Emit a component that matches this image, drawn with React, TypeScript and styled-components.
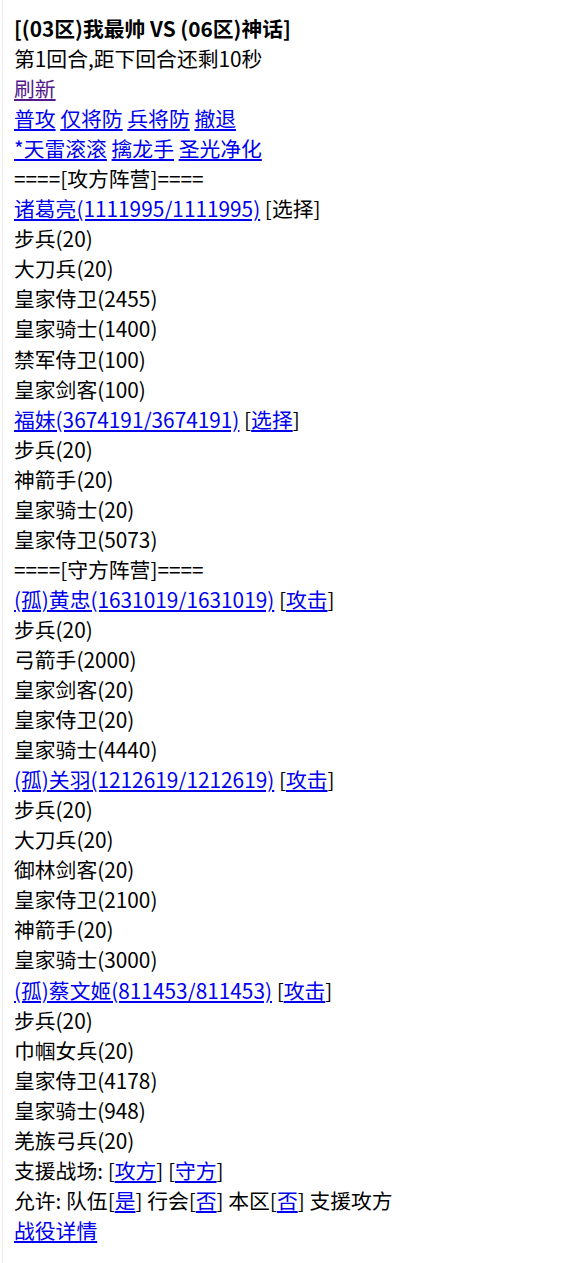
import { Fragment } from 'react';
import styled, { createGlobalStyle } from 'styled-components';

const GlobalStyle = createGlobalStyle`
  html, body {
    margin: 0;
    padding: 0;
    background: #ffffff;
  }
  body {
    font-family: "Noto Sans CJK SC", "Noto Sans", sans-serif;
    font-size: 20.8px;
    line-height: 30.05px;
    color: #000000;
  }
`;

const Page = styled.div`
  margin-left: 2px;
  min-height: 1263px;
  box-sizing: border-box;
  border-left: 1px solid #ececec;
  padding: 13px 0 0 11px;
`;

const Line = styled.div<{ $bold?: boolean }>`
  white-space: nowrap;
  font-weight: ${(p) => (p.$bold ? 700 : 400)};
`;

const Link = styled.a<{ $visited?: boolean }>`
  color: ${(p) => (p.$visited ? '#551a8b' : '#0000ee')};
  text-decoration: underline;
  cursor: pointer;
`;

interface General {
  name: string;
  hp: string;
  action: string;
  actionLink: boolean;
  troops: string[];
}

const attackers: General[] = [
  {
    name: '诸葛亮',
    hp: '1111995/1111995',
    action: '选择',
    actionLink: false,
    troops: ['步兵(20)', '大刀兵(20)', '皇家侍卫(2455)', '皇家骑士(1400)', '禁军侍卫(100)', '皇家剑客(100)'],
  },
  {
    name: '福妹',
    hp: '3674191/3674191',
    action: '选择',
    actionLink: true,
    troops: ['步兵(20)', '神箭手(20)', '皇家骑士(20)', '皇家侍卫(5073)'],
  },
];

const defenders: General[] = [
  {
    name: '(孤)黄忠',
    hp: '1631019/1631019',
    action: '攻击',
    actionLink: true,
    troops: ['步兵(20)', '弓箭手(2000)', '皇家剑客(20)', '皇家侍卫(20)', '皇家骑士(4440)'],
  },
  {
    name: '(孤)关羽',
    hp: '1212619/1212619',
    action: '攻击',
    actionLink: true,
    troops: ['步兵(20)', '大刀兵(20)', '御林剑客(20)', '皇家侍卫(2100)', '神箭手(20)', '皇家骑士(3000)'],
  },
  {
    name: '(孤)蔡文姬',
    hp: '811453/811453',
    action: '攻击',
    actionLink: true,
    troops: ['步兵(20)', '巾帼女兵(20)', '皇家侍卫(4178)', '皇家骑士(948)', '羌族弓兵(20)'],
  },
];

const GeneralBlock = ({ general }: { general: General }) => (
  <>
    <Line>
      <Link>{`${general.name}(${general.hp})`}</Link>
      {' ['}
      {general.actionLink ? <Link>{general.action}</Link> : general.action}
      ]
    </Line>
    {general.troops.map((t, i) => (
      <Line key={i}>{t}</Line>
    ))}
  </>
);

const App = () => (
  <>
    <GlobalStyle />
    <Page>
      <Line $bold>[(03区)我最帅 VS (06区)神话]</Line>
      <Line>第1回合,距下回合还剩10秒</Line>
      <Line>
        <Link $visited>刷新</Link>
      </Line>
      <Line>
        {['普攻', '仅将防', '兵将防', '撤退'].map((a, i) => (
          <Fragment key={a}>
            {i > 0 && ' '}
            <Link>{a}</Link>
          </Fragment>
        ))}
      </Line>
      <Line>
        {['*天雷滚滚', '擒龙手', '圣光净化'].map((a, i) => (
          <Fragment key={a}>
            {i > 0 && ' '}
            <Link>{a}</Link>
          </Fragment>
        ))}
      </Line>
      <Line>====[攻方阵营]====</Line>
      {attackers.map((g) => (
        <GeneralBlock key={g.name} general={g} />
      ))}
      <Line>====[守方阵营]====</Line>
      {defenders.map((g) => (
        <GeneralBlock key={g.name} general={g} />
      ))}
      <Line>
        支援战场: [<Link>攻方</Link>] [<Link>守方</Link>]
      </Line>
      <Line>
        允许: 队伍[<Link>是</Link>] 行会[<Link>否</Link>] 本区[<Link>否</Link>] 支援攻方
      </Line>
      <Line>
        <Link>战役详情</Link>
      </Line>
    </Page>
  </>
);

export default App;
